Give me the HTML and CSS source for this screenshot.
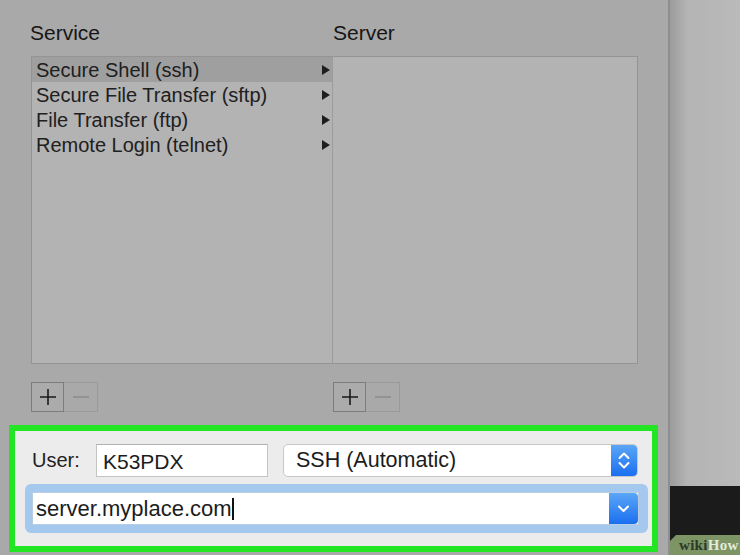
FILE: index.html
```html
<!DOCTYPE html>
<html lang="en">
<head>
    <meta charset="UTF-8">
    <title>New Remote Connection</title>
    <link rel="stylesheet" href="styles.css">
</head>
<body>
    <div class="panel">
        <div class="cols headings">
            <div class="heading">Service</div>
            <div class="heading">Server</div>
        </div>

        <div class="cols">
            <div class="list services">
                <div class="row sel"><span>Secure Shell (ssh)</span><span class="arrow"></span></div>
                <div class="row"><span>Secure File Transfer (sftp)</span><span class="arrow"></span></div>
                <div class="row"><span>File Transfer (ftp)</span><span class="arrow"></span></div>
                <div class="row"><span>Remote Login (telnet)</span><span class="arrow"></span></div>
            </div>
            <div class="list servers"></div>
        </div>

        <div class="cols tools">
            <div class="btns">
                <div class="btn plus"><svg width="18" height="18" viewBox="0 0 18 18"><path d="M9 1 V17 M1 9 H17" stroke="#1a1a1a" stroke-width="1.6"/></svg></div>
                <div class="btn minus"><svg width="18" height="18" viewBox="0 0 18 18"><path d="M1 9 H17" stroke="#8e8e8e" stroke-width="1.6"/></svg></div>
            </div>
            <div class="btns">
                <div class="btn plus"><svg width="18" height="18" viewBox="0 0 18 18"><path d="M9 1 V17 M1 9 H17" stroke="#1a1a1a" stroke-width="1.6"/></svg></div>
                <div class="btn minus"><svg width="18" height="18" viewBox="0 0 18 18"><path d="M1 9 H17" stroke="#8e8e8e" stroke-width="1.6"/></svg></div>
            </div>
        </div>

        <div class="highlight">
            <div class="user-row">
                <span class="label">User:</span>
                <div class="field user">K53PDX</div>
                <div class="popup">
                    <span class="popup-text">SSH (Automatic)</span>
                    <span class="stepper">
                        <svg width="26" height="33" viewBox="0 0 26 33">
                            <path d="M8.5 14 L13 9.5 L17.5 14" fill="none" stroke="#fff" stroke-width="2" stroke-linecap="round" stroke-linejoin="round"/>
                            <path d="M8.5 19 L13 23.5 L17.5 19" fill="none" stroke="#fff" stroke-width="2" stroke-linecap="round" stroke-linejoin="round"/>
                        </svg>
                    </span>
                </div>
            </div>
            <div class="focus-ring">
                <div class="combo">
                    <span class="combo-text">server.myplace.com<span class="caret"></span></span>
                    <span class="drop">
                        <svg width="29" height="33" viewBox="0 0 29 33">
                            <path d="M10 14.5 L14.5 19 L19 14.5" fill="none" stroke="#fff" stroke-width="2" stroke-linecap="round" stroke-linejoin="round"/>
                        </svg>
                    </span>
                </div>
            </div>
        </div>
    </div>

    <div class="side">
        <div class="side-top"></div>
        <div class="side-bottom">
            <div class="badge"><span class="wiki">wiki</span><span class="how">How</span></div>
        </div>
    </div>
</body>
</html>
```

FILE: styles.css
```css
body {
    margin: 0;
    width: 740px;
    height: 555px;
    display: flex;
    overflow: hidden;
    font-family: "Liberation Sans", Arial, sans-serif;
    color: #1c1c1c;
}

.panel {
    width: 670px;
    background-color: #a9a9a9;
    border-right: 2px solid #8e8e8e;
    padding-top: 21px;
    box-sizing: border-box;
}

.cols {
    display: grid;
    grid-template-columns: 302px 305px;
    margin-left: 31px;
}

.headings {
    margin-bottom: 11px;
}

.heading {
    font-size: 21px;
    line-height: 24px;
    color: #161616;
}

.heading:first-child {
    margin-left: -1px;
}

.list {
    height: 308px;
    background-color: #b3b3b3;
    border: 1px solid #949494;
    box-sizing: border-box;
}

.servers {
    border-left: 1px solid #9c9c9c;
    margin-left: -1px;
    width: 306px;
}

.row {
    height: 25px;
    line-height: 26px;
    font-size: 20px;
    padding: 0 2px 0 4px;
    display: flex;
    justify-content: space-between;
    align-items: center;
    color: #202020;
}

.row.sel {
    background-color: #9f9f9f;
}

.arrow {
    width: 0;
    height: 0;
    border-left: 8px solid #1e1e1e;
    border-top: 5px solid transparent;
    border-bottom: 5px solid transparent;
}

.tools {
    margin-top: 18px;
}

.btns {
    display: flex;
}

.btn {
    width: 34px;
    height: 30px;
    box-sizing: border-box;
    display: flex;
    align-items: center;
    justify-content: center;
}

.plus {
    width: 33px;
    border: 1px solid #7c7c7c;
    background-color: #ababab;
}

.minus {
    border: 1px solid #9a9a9a;
    border-left: none;
}

.highlight {
    margin: 13px 0 0 9px;
    width: 649px;
    border: 6px solid #22e524;
    background-color: #ececec;
    padding: 13px 4px 13px 10px;
    box-sizing: border-box;
}

.user-row {
    display: flex;
    align-items: center;
    height: 33px;
    margin: 0 10px 0 7px;
}

.label {
    width: 64px;
    font-size: 20px;
    color: #222;
}

.field {
    background-color: #fff;
    box-sizing: border-box;
}

.user {
    width: 172px;
    height: 33px;
    border: 1px solid #c4c4c4;
    border-top-color: #b2b2b2;
    font-size: 21px;
    line-height: 33px;
    padding-left: 6px;
}

.popup {
    flex: 1;
    height: 33px;
    margin-left: 15px;
    display: flex;
    background-color: #fff;
    border: 1px solid #c8c8c8;
    border-radius: 5px;
    box-sizing: border-box;
    overflow: hidden;
}

.popup-text {
    flex: 1;
    font-size: 21.5px;
    line-height: 31px;
    padding-left: 12px;
}

.stepper {
    width: 26px;
    height: 31px;
    background: linear-gradient(#5aa6f7, #1b6ff0);
}

.stepper svg,
.drop svg {
    display: block;
    margin-top: -1px;
}

.focus-ring {
    margin-top: 7px;
    background-color: #a5c8ee;
    border-radius: 6px;
    padding: 8px 9px 8px 7px;
}

.combo {
    height: 33px;
    display: flex;
    background-color: #fff;
    border: 1px solid #b9cde2;
    box-sizing: border-box;
}

.combo-text {
    flex: 1;
    font-size: 22px;
    line-height: 31px;
    padding-left: 3px;
}

.caret {
    display: inline-block;
    width: 2px;
    height: 22px;
    background-color: #111;
    vertical-align: -4px;
}

.drop {
    width: 29px;
    height: 31px;
    background: linear-gradient(#5aa6f7, #1b6ff0);
    border-radius: 0 4px 4px 0;
}

.side {
    width: 70px;
    display: flex;
    flex-direction: column;
}

.side-top {
    flex: 1;
    background: linear-gradient(to right, #9c9c9c, #b4b4b4 25%, #bababa);
}

.side-bottom {
    height: 69px;
    background-color: #1b1b1b;
    position: relative;
}

.badge {
    position: absolute;
    right: 0;
    bottom: 0;
    width: 70px;
    height: 20px;
    background-color: #7d9565;
    clip-path: polygon(6px 0, 100% 0, 100% 100%, 0 100%, 0 6px);
    font-family: "Liberation Serif", "Times New Roman", serif;
    font-weight: bold;
    font-size: 15px;
    line-height: 21px;
    padding-left: 9px;
    letter-spacing: 0.3px;
    box-sizing: border-box;
}

.wiki {
    color: #2c3a27;
}

.how {
    color: #e3eadc;
}
```
